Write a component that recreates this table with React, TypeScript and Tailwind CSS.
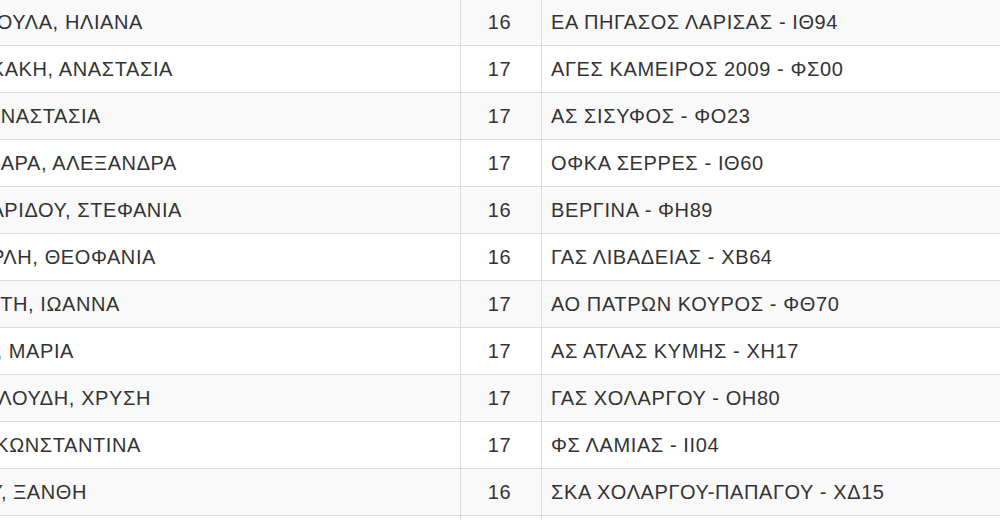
const ROWS: { name: string; end: number; age: number; club: string }[] = [
  { name: 'ΟΥΛΑ, ΗΛΙΑΝΑ', end: 143, age: 16, club: 'ΕΑ ΠΗΓΑΣΟΣ ΛΑΡΙΣΑΣ - ΙΘ94' },
  { name: 'ΚΑΚΗ, ΑΝΑΣΤΑΣΙΑ', end: 173, age: 17, club: 'ΑΓΕΣ ΚΑΜΕΙΡΟΣ 2009 - ΦΣ00' },
  { name: 'ΑΝΑΣΤΑΣΙΑ', end: 101, age: 17, club: 'ΑΣ ΣΙΣΥΦΟΣ - ΦΟ23' },
  { name: 'ΜΑΡΑ, ΑΛΕΞΑΝΔΡΑ', end: 177, age: 17, club: 'ΟΦΚΑ ΣΕΡΡΕΣ - ΙΘ60' },
  { name: 'ΑΡΙΔΟΥ, ΣΤΕΦΑΝΙΑ', end: 182, age: 16, club: 'ΒΕΡΓΙΝΑ - ΦΗ89' },
  { name: 'ΡΛΗ, ΘΕΟΦΑΝΙΑ', end: 156, age: 16, club: 'ΓΑΣ ΛΙΒΑΔΕΙΑΣ - ΧΒ64' },
  { name: 'ΤΗ, ΙΩΑΝΝΑ', end: 120, age: 17, club: 'ΑΟ ΠΑΤΡΩΝ ΚΟΥΡΟΣ - ΦΘ70' },
  { name: ', ΜΑΡΙΑ', end: 74, age: 17, club: 'ΑΣ ΑΤΛΑΣ ΚΥΜΗΣ - ΧΗ17' },
  { name: 'ΛΟΥΔΗ, ΧΡΥΣΗ', end: 151, age: 17, club: 'ΓΑΣ ΧΟΛΑΡΓΟΥ - ΟΗ80' },
  { name: 'ΚΩΝΣΤΑΝΤΙΝΑ', end: 141, age: 17, club: 'ΦΣ ΛΑΜΙΑΣ - ΙΙ04' },
  { name: 'Υ, ΞΑΝΘΗ', end: 87, age: 16, club: 'ΣΚΑ ΧΟΛΑΡΓΟΥ-ΠΑΠΑΓΟΥ - ΧΔ15' },
  { name: '', end: 0, age: 0, club: '' },
];

export default function App() {
  return (
    <div className="h-[520px] w-[1000px] overflow-hidden bg-white font-['Liberation_Sans',Arial,sans-serif] text-[20px] tracking-[0.6px] text-[#333]">
      <div className="-mt-[1px]">
        {ROWS.map((row, i) => (
          <div
            key={i}
            className={`grid h-[47px] grid-cols-[461px_81px_1fr] border-b border-[#dddddd] ${
              i % 2 === 0 ? 'bg-[#f9f9f9]' : 'bg-white'
            }`}>
            <div className="flex items-center border-r border-[#dddddd]">
              {row.name ? (
                // name column is scrolled off to the left; only its tail shows
                <div className="flex justify-end" style={{ width: row.end }}>
                  <span className="shrink-0 whitespace-nowrap">{row.name}</span>
                </div>
              ) : null}
            </div>
            <div className="flex items-center justify-center pr-[3px] border-r border-[#dddddd]">
              {row.age || ''}
            </div>
            <div className="flex items-center whitespace-nowrap pl-[9px]">
              {row.club}
            </div>
          </div>
        ))}
      </div>
    </div>
  );
}
